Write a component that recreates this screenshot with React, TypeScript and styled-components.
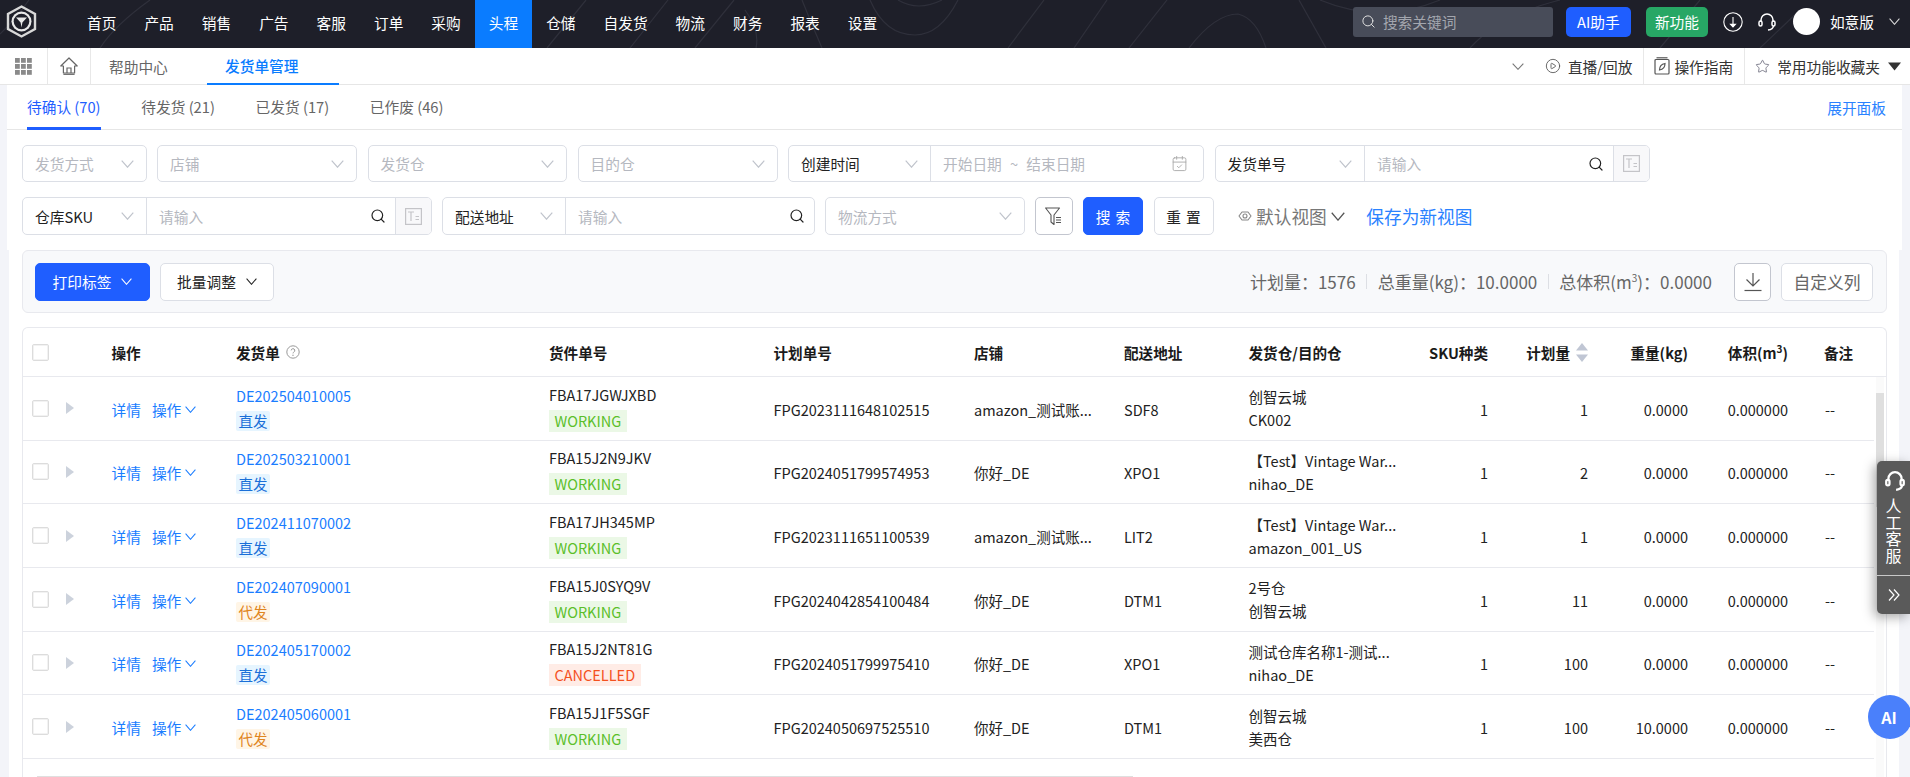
import React from "react";
import styled, { createGlobalStyle } from "styled-components";
import { Search, CalendarCheck, CirclePlay, Star } from "lucide-react";

const Global = createGlobalStyle`
  html, body { margin: 0; padding: 0; height: 777px; overflow: hidden; background: #f3f4f9; }
  body { font-family: "Noto Sans CJK SC", "Noto Sans", sans-serif; font-size: 14.7px; color: #222; }
  * { box-sizing: border-box; }
`;

const Page = styled.div`
  position: relative;
  width: 1910px;
  height: 777px;
  overflow: hidden;
`;

/* ---------- top bar ---------- */
const TopBar = styled.header`
  position: relative;
  height: 48px;
  background: #1e1f29;
  display: flex;
  align-items: stretch;
  color: #fff;
`;
const TopTexture = styled.svg`
  position: absolute;
  inset: 0;
  width: 1910px;
  height: 48px;
  pointer-events: none;
`;
const LogoSlot = styled.div`
  position: relative;
  width: 73px;
  display: flex;
  align-items: center;
  padding: 0 0 5px 6px;
`;
const NavList = styled.nav`
  position: relative;
  display: flex;
`;
const NavItem = styled.a<{ $active?: boolean }>`
  display: flex;
  align-items: center;
  padding: 0 14px 4px;
  font-size: 14.7px;
  background: ${(p) => (p.$active ? "#0a7cff" : "transparent")};
  color: #fff;
`;
const TopRight = styled.div`
  position: relative;
  margin-left: auto;
  display: flex;
  align-items: center;
  padding: 0 10px 5px 0;
`;
const TopSearch = styled.div`
  width: 200px;
  height: 30px;
  background: #484c59;
  border-radius: 3px;
  display: flex;
  align-items: center;
  gap: 7px;
  padding-left: 8px;
  margin-right: 13px;
  color: #a3a6ae;
  font-size: 14.7px;
`;
const TopButton = styled.div<{ $bg: string; $w: number }>`
  width: ${(p) => p.$w}px;
  height: 30px;
  border-radius: 5px;
  background: ${(p) => p.$bg};
  display: flex;
  align-items: center;
  justify-content: center;
  font-size: 14.7px;
  margin-right: 15px;
`;
const TopIcon = styled.div<{ $mr: number }>`
  display: flex;
  margin-right: ${(p) => p.$mr}px;
`;
const Avatar = styled.div`
  width: 27px;
  height: 27px;
  border-radius: 50%;
  background: #fff;
  margin-right: 10px;
`;
const Edition = styled.span`
  font-size: 14.7px;
  margin-right: 15px;
`;

/* ---------- page tabs ---------- */
const TabStrip = styled.div`
  height: 37px;
  background: #fff;
  border-bottom: 1px solid #e6e6e6;
  display: flex;
  align-items: stretch;
`;
const StripIcon = styled.div<{ $w: number }>`
  width: ${(p) => p.$w}px;
  border-right: 1px solid #e8e8e8;
  display: flex;
  align-items: center;
  justify-content: center;
`;
const PageTab = styled.div<{ $active?: boolean }>`
  display: flex;
  align-items: center;
  padding: 0 18px;
  font-size: 14.7px;
  color: ${(p) => (p.$active ? "#0a7cff" : "#666")};
  font-weight: ${(p) => (p.$active ? 500 : 400)};
  ${(p) => (p.$active ? "border-bottom: 2px solid #0a7cff; margin-bottom: -1px; width: 132px;" : "width: 116px;")}
`;
const StripRight = styled.div`
  margin-left: auto;
  display: flex;
  align-items: stretch;
  color: #333;
  font-size: 14.7px;
  padding-right: 4px;
`;
const StripChevron = styled.div`
  display: flex;
  align-items: center;
  margin-right: 21px;
`;
const StripAction = styled.div<{ $line?: boolean; $pr: number; $pl: number; $gap: number }>`
  display: flex;
  align-items: center;
  gap: ${(p) => p.$gap}px;
  padding: 0 ${(p) => p.$pr}px 0 ${(p) => p.$pl}px;
  ${(p) => (p.$line ? "border-right: 1px solid #e8e8e8;" : "")}
`;

/* ---------- filters ---------- */
const TopPanel = styled.section`
  margin: 0 8px 0 7px;
  height: 165px;
  background: #fff;
`;
const StatusTabs = styled.div`
  height: 45px;
  border-bottom: 1px solid #e6e6e6;
  display: flex;
  align-items: stretch;
  gap: 40.7px;
  padding: 0 16px 0 20px;
`;
const StatusTab = styled.div<{ $active?: boolean }>`
  display: flex;
  align-items: center;
  font-size: 14.7px;
  margin-bottom: -1px;
  padding-top: 1px;
  color: ${(p) => (p.$active ? "#1f5eff" : "#666")};
  border-bottom: 3px solid ${(p) => (p.$active ? "#1f5eff" : "transparent")};
`;
const ExpandLink = styled.a`
  margin-left: auto;
  display: flex;
  align-items: center;
  color: #2a82ff;
  font-size: 14.7px;
`;
const FilterRows = styled.div`
  display: flex;
  flex-direction: column;
  gap: 15px;
  padding: 15px 0 0 15px;
`;
const FilterRow = styled.div`
  display: flex;
  gap: 10.5px;
  align-items: center;
`;
const Control = styled.div<{ $w: number; $h: number }>`
  width: ${(p) => p.$w}px;
  height: ${(p) => p.$h}px;
  border: 1px solid #dcdfe6;
  border-radius: 5px;
  background: #fff;
  display: flex;
  align-items: stretch;
  font-size: 14.7px;
  overflow: hidden;
`;
const SelectPart = styled.div<{ $w?: number; $muted?: boolean }>`
  ${(p) => (p.$w ? `width: ${p.$w}px; border-right: 1px solid #dcdfe6;` : "flex: 1;")}
  display: flex;
  align-items: center;
  justify-content: space-between;
  padding: 0 12px;
  color: ${(p) => (p.$muted ? "#b5b8c0" : "#222")};
`;
const InputPart = styled.div`
  flex: 1;
  display: flex;
  align-items: center;
  justify-content: space-between;
  padding: 0 9px 0 12px;
  color: #b5b8c0;
`;
const DatePart = styled(InputPart)`
  padding-right: 15px;
  word-spacing: 0.8px;
`;
const AddonPart = styled.div`
  width: 36px;
  border-left: 1px solid #dcdfe6;
  background: #f8f8fa;
  display: flex;
  align-items: center;
  justify-content: center;
`;
const IconButton = styled.div<{ $w: number; $h: number }>`
  width: ${(p) => p.$w}px;
  height: ${(p) => p.$h}px;
  border: 1px solid #c3c6cf;
  border-radius: 5px;
  background: #fff;
  display: flex;
  align-items: center;
  justify-content: center;
`;
const ActionButton = styled.div<{ $primary?: boolean }>`
  width: 60px;
  height: 38px;
  border-radius: 5px;
  display: flex;
  align-items: center;
  justify-content: center;
  letter-spacing: 5px;
  padding-left: 5px;
  font-size: 14.7px;
  background: ${(p) => (p.$primary ? "#1f5eff" : "#fff")};
  color: ${(p) => (p.$primary ? "#fff" : "#222")};
  border: 1px solid ${(p) => (p.$primary ? "#1f5eff" : "#dcdfe6")};
`;
const ViewPicker = styled.div`
  display: flex;
  align-items: center;
  gap: 4px;
  margin-left: 14px;
  font-size: 17.7px;
  color: #777;
`;
const SaveView = styled.a`
  margin-left: 11px;
  font-size: 17.7px;
  color: #2a82ff;
`;

/* ---------- lower panel ---------- */
const LowerPanel = styled.section`
  margin: 0 11px 0 9px;
  height: 527px;
  padding: 0 12px 0 13px;
  background: #fff;
`;
const Toolbar = styled.div`
  height: 63px;
  background: #f8f9fb;
  border: 1px solid #e8e9ee;
  border-radius: 6px;
  display: flex;
  align-items: center;
  padding: 0 13px 0 12px;
  margin-bottom: 14px;
`;
const MenuButton = styled.div<{ $primary?: boolean; $w: number }>`
  width: ${(p) => p.$w}px;
  height: 38px;
  border-radius: 5px;
  margin-right: 10px;
  display: flex;
  align-items: center;
  justify-content: center;
  gap: 10px;
  font-size: 14.7px;
  background: ${(p) => (p.$primary ? "#1f5eff" : "#fff")};
  color: ${(p) => (p.$primary ? "#fff" : "#222")};
  border: 1px solid ${(p) => (p.$primary ? "#1f5eff" : "#dcdfe6")};
`;
const Stats = styled.div`
  margin-left: auto;
  display: flex;
  align-items: center;
  font-size: 17px;
  color: #666;
  margin-right: 22px;
`;
const StatSep = styled.span`
  width: 1px;
  height: 15px;
  margin: 0 10.5px;
  background: #dddfe4;
`;
const Sup = styled.sup`
  font-size: 10px;
  line-height: 0;
`;
const CustomCols = styled.div`
  width: 92px;
  height: 38px;
  margin-left: 10px;
  border: 1px solid #dcdfe6;
  border-radius: 5px;
  background: #fff;
  color: #666;
  font-size: 16.8px;
  display: flex;
  align-items: center;
  justify-content: center;
`;

/* ---------- table ---------- */
const COLS = "88.5px 124.5px 313px 224.5px 200.5px 150px 124.5px 151.5px 88px 100px 100px 100px 86px";
const TableBox = styled.div`
  position: relative;
  height: 460px;
  border: 1px solid #e8e9ee;
  border-bottom: 0;
  border-radius: 6px 6px 0 0;
  overflow: hidden;
  font-size: 14.5px;
`;
const HeadRow = styled.div`
  display: grid;
  grid-template-columns: ${COLS};
  height: 49px;
  border-bottom: 1px solid #e8e9ee;
  font-weight: 700;
  font-size: 14.6px;
  color: #1a1a1a;
`;
const HeadCell = styled.div<{ $right?: boolean; $pl?: number }>`
  display: flex;
  align-items: center;
  gap: 6px;
  ${(p) => (p.$right ? "justify-content: flex-end;" : "")}
  ${(p) => (p.$pl ? `padding-left: ${p.$pl}px;` : "")}
`;
const DataRow = styled.div`
  display: grid;
  grid-template-columns: ${COLS};
  width: 1851px;
  height: 63.67px;
  border-bottom: 1px solid #e8e9ee;
  color: #222;
`;
const Cell = styled.div<{ $right?: boolean; $pl?: number }>`
  display: flex;
  align-items: center;
  padding-top: 2px;
  ${(p) => (p.$right ? "justify-content: flex-end;" : "")}
  ${(p) => (p.$pl ? `padding-left: ${p.$pl}px;` : "")}
`;
const Stack = styled.div`
  display: flex;
  flex-direction: column;
  align-items: flex-start;
  justify-content: center;
  gap: 5px;
  line-height: 20px;
`;
const LineStack = styled.div`
  display: flex;
  flex-direction: column;
  justify-content: center;
  line-height: 23px;
`;
const CheckCell = styled.div`
  display: flex;
  align-items: center;
  gap: 17px;
  padding-left: 9px;
`;
const CheckBox = styled.span`
  width: 17px;
  height: 17px;
  border: 1px solid #dcdcdc;
  border-radius: 2px;
  background: #fff;
  box-shadow: inset 0 0 0 1px #f2f2f2;
`;
const Caret = styled.span`
  width: 0;
  height: 0;
  border-style: solid;
  border-width: 6px 0 6px 8px;
  border-color: transparent transparent transparent #ccd2dc;
`;
const Link = styled.a`
  color: #1a7dff;
`;
const ActionLinks = styled(Link)`
  display: flex;
  align-items: center;
  gap: 11px;
  font-size: 14.7px;
`;
const ActionMenu = styled.span`
  display: flex;
  align-items: center;
  gap: 4px;
`;
const ShipTag = styled.span<{ $kind: "direct" | "agent" }>`
  height: 20px;
  width: 34px;
  display: flex;
  align-items: center;
  justify-content: center;
  border-radius: 2px;
  background: ${(p) => (p.$kind === "direct" ? "#e6f5ff" : "#fff5e6")};
  color: ${(p) => (p.$kind === "direct" ? "#1a6fd8" : "#e0851f")};
`;
const StatusTag = styled.span<{ $bad?: boolean }>`
  height: 22px;
  padding: 0 5.5px;
  display: flex;
  align-items: center;
  background: ${(p) => (p.$bad ? "#ffece6" : "#ebf8e6")};
  color: ${(p) => (p.$bad ? "#f4511e" : "#5bbf2a")};
`;
const Scrollbar = styled.div`
  position: absolute;
  top: 49px;
  left: 1853px;
  width: 8px;
  height: 410px;
  background: #fafafa;
`;
const ScrollThumb = styled.div`
  margin-top: 16px;
  height: 114px;
  background: #dfdfdf;
`;
const HScrollThumb = styled.div`
  position: absolute;
  left: 14px;
  top: 448px;
  width: 1096px;
  height: 3px;
  background: #dfdfdf;
`;

/* ---------- floating widgets ---------- */
const SupportPanel = styled.aside`
  position: absolute;
  left: 1877px;
  top: 461px;
  width: 33px;
  height: 153px;
  background: #5a5a5a;
  border-radius: 5px 0 0 5px;
  box-shadow: -3px 3px 12px rgba(0, 0, 0, 0.35);
  color: #fff;
  display: flex;
  flex-direction: column;
`;
const SupportTop = styled.div`
  height: 115px;
  border-bottom: 1px solid #c8c8c8;
  display: flex;
  flex-direction: column;
  align-items: center;
  padding-top: 9px;
  font-size: 16px;
  line-height: 16.6px;
`;
const SupportIcon = styled.div`
  margin-bottom: 5px;
  margin-left: 3px;
  display: flex;
`;
const SupportChars = styled.div`
  width: 16px;
  text-align: center;
`;
const SupportFold = styled.div`
  flex: 1;
  display: flex;
  align-items: center;
  justify-content: center;
`;
const AiBall = styled.div`
  position: absolute;
  left: 1868px;
  top: 695px;
  width: 44px;
  height: 44px;
  border-radius: 50%;
  background: #4a80fb;
  color: #fff;
  font-weight: 700;
  font-size: 16px;
  display: flex;
  align-items: center;
  justify-content: center;
  padding-right: 2px;
`;

/* ---------- drawings ---------- */
const Chevron = ({ w = 13, h = 8, c = "#c0c4cc", sw = 1.2 }: { w?: number; h?: number; c?: string; sw?: number }) => (
  <svg width={w} height={h} viewBox="0 0 13 8" fill="none" preserveAspectRatio="none">
    <polyline points="0.7,0.7 6.5,7.2 12.3,0.7" stroke={c} strokeWidth={sw} />
  </svg>
);
const Logo = () => (
  <svg width="31" height="33" viewBox="0 0 31 33" fill="none">
    <path d="M15.5 1.5 L29 9 V24 L15.5 31.5 L2 24 V9 Z" stroke="#d8d8d8" strokeWidth="2.4" />
    <circle cx="15.5" cy="16.5" r="10" fill="#e8e8e8" />
    <circle cx="15.5" cy="16.5" r="7.8" fill="#1e1f29" />
    <path d="M10 12.5 L21 12.5 L16.4 17.4 L15.5 22.5 L14.6 17.4 Z" fill="#e8e8e8" />
  </svg>
);
const GridIcon = () => (
  <svg width="17" height="17" viewBox="0 0 17 17" fill="#8a8a8a">
    {[0, 6, 12].map((y) => [0, 6, 12].map((x) => <rect key={`${x}-${y}`} x={x} y={y} width="4.8" height="4.8" />))}
  </svg>
);
const HomeIcon = () => (
  <svg width="18" height="18" viewBox="0 0 18 18" fill="none" stroke="#666" strokeWidth="1.2">
    <path d="M0.8 9 L9 1 L17.2 9 H14.6 V16 H3.4 V9 Z" strokeLinejoin="round" />
    <path d="M7 16 V11 H11 V16" />
    <path d="M3.4 17.3 H14.6" />
  </svg>
);
const Headset = ({ size = 20, sw = 1.5 }: { size?: number; sw?: number }) => (
  <svg width={size} height={size} viewBox="0 0 20 20" fill="none" stroke="#fff" strokeWidth={sw}>
    <path d="M4 10 V8 a6 6 0 0 1 12 0 V10" />
    <rect x="2" y="9" width="3" height="5" rx="1.5" />
    <rect x="15" y="9" width="3" height="5" rx="1.5" />
    <path d="M16.5 14 Q16 17.5 11 18" />
  </svg>
);
const DownloadCircle = () => (
  <svg width="20" height="20" viewBox="0 0 20 20" fill="none" stroke="#fff" strokeWidth="1.1">
    <circle cx="10" cy="10" r="9.2" />
    <path d="M10 5 V14" />
    <path d="M7.6 12.4 L10 15 L12.4 12.4 Z" fill="#fff" />
  </svg>
);
const GuideIcon = () => (
  <svg width="16" height="18" viewBox="0 0 16 18" fill="none" stroke="#555" strokeWidth="1.2">
    <rect x="1" y="2.5" width="14" height="14.5" rx="1" />
    <path d="M2.5 0.8 H13.5" />
    <path d="M5.5 13 C5.5 9 8 7 11 6.5 C11 10 9 12.5 5.5 13 Z" />
  </svg>
);
const WrapIcon = () => (
  <svg width="17" height="17" viewBox="0 0 17 17" fill="none" stroke="#c4c4c8" strokeWidth="1.2">
    <rect x="0.6" y="0.6" width="15.8" height="15.8" />
    <path d="M3 4 H9 M6 4 V13 M10.5 8.5 H14 M10.5 11.5 H14" />
  </svg>
);
const FunnelIcon = () => (
  <svg width="17" height="19" viewBox="0 0 17 19" fill="none" stroke="#555" strokeWidth="1.1">
    <path d="M0.6 1 H14.5 L9 8 V17.5 L6 15 V8 Z" strokeLinejoin="round" />
    <path d="M11 10.5 H16 M11 13 H16 M11 15.5 H16" />
  </svg>
);
const EyeRing = () => (
  <svg width="14" height="14" viewBox="0 0 14 14" fill="none" stroke="#888" strokeWidth="1.1">
    <path d="M1 7 L4 3 H10 L13 7 L10 11 H4 Z" strokeLinejoin="round" />
    <circle cx="7" cy="7" r="2" />
  </svg>
);
const TrayDownload = () => (
  <svg width="18" height="20" viewBox="0 0 18 20" fill="none" stroke="#555" strokeWidth="1.2">
    <path d="M9 1 V14 M2.5 7.5 L9 14 L15.5 7.5" />
    <path d="M0.5 18.5 H17.5" />
  </svg>
);
const HelpDot = () => (
  <svg width="14" height="14" viewBox="0 0 14 14" fill="none" stroke="#999" strokeWidth="1">
    <circle cx="7" cy="7" r="6.2" />
    <path d="M5.2 5.4 a1.8 1.8 0 1 1 2.6 1.7 q-0.8 0.4 -0.8 1.3" />
    <circle cx="7" cy="10.2" r="0.3" />
  </svg>
);
const SortIcon = () => (
  <svg width="12" height="19" viewBox="0 0 12 19" fill="#c0c6d4">
    <path d="M6 0 L12 7.5 H0 Z" />
    <path d="M0 11.5 H12 L6 19 Z" />
  </svg>
);
const DoubleRight = () => (
  <svg width="12" height="12" viewBox="0 0 12 12" fill="none" stroke="#fff" strokeWidth="1.2">
    <path d="M1 0.5 L6 6 L1 11.5 M6 0.5 L11 6 L6 11.5" />
  </svg>
);
const Triangle = () => (
  <svg width="15" height="9" viewBox="0 0 15 9" fill="#333">
    <path d="M1 0.5 H14 L7.5 8.5 Z" />
  </svg>
);

const NAV = ["首页", "产品", "销售", "广告", "客服", "订单", "采购", "头程", "仓储", "自发货", "物流", "财务", "报表", "设置"];
const STATUS = ["待确认 (70)", "待发货 (21)", "已发货 (17)", "已作废 (46)"];

type Row = {
  id: string; kind: "direct" | "agent"; fba: string; bad?: boolean; plan: string; shop: string; addr: string;
  a: string; b: string; qty: string; weight: string;
};
const ROWS: Row[] = [
  { id: "DE202504010005", kind: "direct", fba: "FBA17JGWJXBD", plan: "FPG2023111648102515", shop: "amazon_测试账...", addr: "SDF8", a: "创智云城", b: "CK002", qty: "1", weight: "0.0000" },
  { id: "DE202503210001", kind: "direct", fba: "FBA15J2N9JKV", plan: "FPG2024051799574953", shop: "你好_DE", addr: "XPO1", a: "【Test】Vintage War...", b: "nihao_DE", qty: "2", weight: "0.0000" },
  { id: "DE202411070002", kind: "direct", fba: "FBA17JH345MP", plan: "FPG2023111651100539", shop: "amazon_测试账...", addr: "LIT2", a: "【Test】Vintage War...", b: "amazon_001_US", qty: "1", weight: "0.0000" },
  { id: "DE202407090001", kind: "agent", fba: "FBA15J0SYQ9V", plan: "FPG2024042854100484", shop: "你好_DE", addr: "DTM1", a: "2号仓", b: "创智云城", qty: "11", weight: "0.0000" },
  { id: "DE202405170002", kind: "direct", fba: "FBA15J2NT81G", bad: true, plan: "FPG2024051799975410", shop: "你好_DE", addr: "XPO1", a: "测试仓库名称1-测试...", b: "nihao_DE", qty: "100", weight: "0.0000" },
  { id: "DE202405060001", kind: "agent", fba: "FBA15J1F5SGF", plan: "FPG2024050697525510", shop: "你好_DE", addr: "DTM1", a: "创智云城", b: "美西仓", qty: "100", weight: "10.0000" },
];

const SearchGlyph = () => <Search size={16} color="#222" strokeWidth={1.8} />;

export default function App() {
  return (
    <Page>
      <Global />
      <TopBar>
        <TopTexture viewBox="0 0 1910 48" fill="none" stroke="#2f303b" strokeWidth="1.2">
          <path d="M0 34 Q15 20 29 0" />
          <path d="M100 48 Q115 25 150 0" />
          <path d="M547 48 L586 0" />
          <path d="M630 48 L668 0" />
          <path d="M695 48 L734 0" />
          <path d="M756 48 Q760 30 745 10" />
          <path d="M802 0 Q812 25 822 48" />
          <path d="M870 0 Q885 35 915 35 Q940 35 958 0" />
          <path d="M898 0 Q918 12 942 0" />
          <path d="M1008 48 L1044 0" />
          <path d="M1074 48 L1107 0" />
          <path d="M1129 48 L1167 0" />
          <path d="M1189 48 Q1215 14 1238 14 Q1256 18 1266 48" />
          <path d="M1299 0 L1326 48" />
          <path d="M1470 48 Q1500 15 1560 0" />
          <path d="M1320 0 Q1380 25 1440 0" />
          <path d="M1660 48 L1700 0" />
          <path d="M1760 48 L1800 10" />
        </TopTexture>
        <LogoSlot><Logo /></LogoSlot>
        <NavList>
          {NAV.map((n) => <NavItem key={n} $active={n === "头程"}>{n}</NavItem>)}
        </NavList>
        <TopRight>
          <TopSearch><Search size={15} color="#e0e0e0" strokeWidth={1.6} />搜索关键词</TopSearch>
          <TopButton $bg="#1f5eff" $w={65}>AI助手</TopButton>
          <TopButton $bg="#27a765" $w={62}>新功能</TopButton>
          <TopIcon $mr={14}><DownloadCircle /></TopIcon>
          <TopIcon $mr={16}><Headset /></TopIcon>
          <Avatar />
          <Edition>如意版</Edition>
          <Chevron w={11} h={7} c="#ddd" />
        </TopRight>
      </TopBar>

      <TabStrip>
        <StripIcon $w={48}><GridIcon /></StripIcon>
        <StripIcon $w={43}><HomeIcon /></StripIcon>
        <PageTab>帮助中心</PageTab>
        <PageTab $active>发货单管理</PageTab>
        <StripRight>
          <StripChevron><Chevron w={12} h={7} c="#777" /></StripChevron>
          <StripAction $line $pl={0} $pr={11} $gap={7}><CirclePlay size={16} color="#555" strokeWidth={1.3} />直播/回放</StripAction>
          <StripAction $line $pl={10} $pr={11} $gap={4}><GuideIcon />操作指南</StripAction>
          <StripAction $pl={10} $pr={4} $gap={7}>
            <Star size={15} color="#667" strokeWidth={1.3} />
            常用功能收藏夹
            <Triangle />
          </StripAction>
        </StripRight>
      </TabStrip>

      <TopPanel>
        <StatusTabs>
          {STATUS.map((s, i) => <StatusTab key={s} $active={i === 0}>{s}</StatusTab>)}
          <ExpandLink>展开面板</ExpandLink>
        </StatusTabs>
        <FilterRows>
          <FilterRow>
            <Control $w={124.5} $h={37}><SelectPart $muted>发货方式<Chevron /></SelectPart></Control>
            <Control $w={200} $h={37}><SelectPart $muted>店铺<Chevron /></SelectPart></Control>
            <Control $w={199.5} $h={37}><SelectPart $muted>发货仓<Chevron /></SelectPart></Control>
            <Control $w={200} $h={37}><SelectPart $muted>目的仓<Chevron /></SelectPart></Control>
            <Control $w={416} $h={37}>
              <SelectPart $w={142}>创建时间<Chevron /></SelectPart>
              <DatePart>开始日期&nbsp; ~ &nbsp;结束日期<CalendarCheck size={17} color="#aaa" strokeWidth={1.3} /></DatePart>
            </Control>
            <Control $w={435} $h={37}>
              <SelectPart $w={149.5}>发货单号<Chevron /></SelectPart>
              <InputPart>请输入<SearchGlyph /></InputPart>
              <AddonPart><WrapIcon /></AddonPart>
            </Control>
          </FilterRow>
          <FilterRow>
            <Control $w={409.5} $h={38}>
              <SelectPart $w={124}>仓库SKU<Chevron /></SelectPart>
              <InputPart>请输入<SearchGlyph /></InputPart>
              <AddonPart><WrapIcon /></AddonPart>
            </Control>
            <Control $w={372.5} $h={38}>
              <SelectPart $w={123}>配送地址<Chevron /></SelectPart>
              <InputPart>请输入<SearchGlyph /></InputPart>
            </Control>
            <Control $w={199.5} $h={38}><SelectPart $muted>物流方式<Chevron /></SelectPart></Control>
            <IconButton $w={37.5} $h={38}><FunnelIcon /></IconButton>
            <ActionButton $primary>搜索</ActionButton>
            <ActionButton>重置</ActionButton>
            <ViewPicker><EyeRing />默认视图<Chevron w={14} h={9} c="#555" /></ViewPicker>
            <SaveView>保存为新视图</SaveView>
          </FilterRow>
        </FilterRows>
      </TopPanel>

      <LowerPanel>
        <Toolbar>
          <MenuButton $primary $w={115}>打印标签<Chevron w={11} h={7} c="#fff" /></MenuButton>
          <MenuButton $w={114}>批量调整<Chevron w={11} h={7} c="#222" /></MenuButton>
          <Stats>
            <span>计划量：1576</span><StatSep /><span>总重量(kg)：10.0000</span><StatSep /><span>总体积(m<Sup>3</Sup>)：0.0000</span>
          </Stats>
          <IconButton $w={37} $h={38}><TrayDownload /></IconButton>
          <CustomCols>自定义列</CustomCols>
        </Toolbar>

        <TableBox>
          <HeadRow>
            <CheckCell><CheckBox /></CheckCell>
            <HeadCell>操作</HeadCell>
            <HeadCell>发货单<HelpDot /></HeadCell>
            <HeadCell>货件单号</HeadCell>
            <HeadCell>计划单号</HeadCell>
            <HeadCell>店铺</HeadCell>
            <HeadCell>配送地址</HeadCell>
            <HeadCell>发货仓/目的仓</HeadCell>
            <HeadCell $right>SKU种类</HeadCell>
            <HeadCell $right>计划量<SortIcon /></HeadCell>
            <HeadCell $right>重量(kg)</HeadCell>
            <HeadCell $right><span>体积(m<Sup>3</Sup>)</span></HeadCell>
            <HeadCell $pl={36}>备注</HeadCell>
          </HeadRow>
          {ROWS.map((r) => (
            <DataRow key={r.id}>
              <CheckCell><CheckBox /><Caret /></CheckCell>
              <Cell>
                <ActionLinks>详情<ActionMenu>操作<Chevron w={11} h={7} c="#1a7dff" /></ActionMenu></ActionLinks>
              </Cell>
              <Stack>
                <Link>{r.id}</Link>
                <ShipTag $kind={r.kind}>{r.kind === "direct" ? "直发" : "代发"}</ShipTag>
              </Stack>
              <Stack>
                <span>{r.fba}</span>
                <StatusTag $bad={r.bad}>{r.bad ? "CANCELLED" : "WORKING"}</StatusTag>
              </Stack>
              <Cell>{r.plan}</Cell>
              <Cell>{r.shop}</Cell>
              <Cell>{r.addr}</Cell>
              <LineStack><span>{r.a}</span><span>{r.b}</span></LineStack>
              <Cell $right>1</Cell>
              <Cell $right>{r.qty}</Cell>
              <Cell $right>{r.weight}</Cell>
              <Cell $right>0.000000</Cell>
              <Cell $pl={37}>--</Cell>
            </DataRow>
          ))}
          <Scrollbar><ScrollThumb /></Scrollbar>
          <HScrollThumb />
        </TableBox>
      </LowerPanel>

      <SupportPanel>
        <SupportTop>
          <SupportIcon><Headset size={22} sw={2} /></SupportIcon>
          <SupportChars>人工客服</SupportChars>
        </SupportTop>
        <SupportFold><DoubleRight /></SupportFold>
      </SupportPanel>
      <AiBall>AI</AiBall>
    </Page>
  );
}
